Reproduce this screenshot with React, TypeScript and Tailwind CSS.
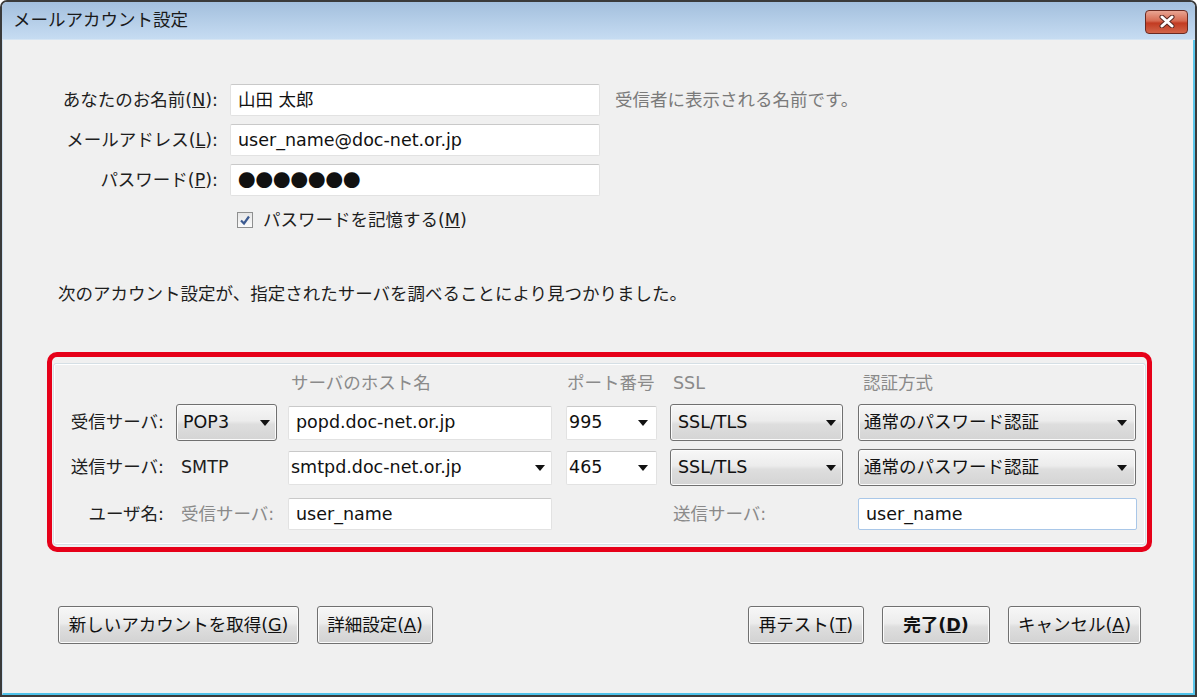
import { ReactNode } from "react";

const font = "font-['DejaVu_Sans','Noto_Sans_CJK_JP',sans-serif]";

function Arrow() {
  return (
    <svg width="10" height="6" viewBox="0 0 10 6" className="shrink-0">
      <polygon points="0,0 10,0 5,6" fill="#111" />
    </svg>
  );
}

function TextBox({ children, className = "" }: { children?: ReactNode; className?: string }) {
  return (
    <div
      className={
        "flex items-center bg-white border border-[#e2e2e2] border-t-[#c9c9c9] rounded-[2px] text-[#111] " +
        className
      }
    >
      {children}
    </div>
  );
}

function Select({ label, className = "" }: { label: string; className?: string }) {
  return (
    <div
      className={
        "flex items-center justify-between border border-[#707070] rounded-[3px] bg-[linear-gradient(to_bottom,#f7f7f7_0%,#ececec_45%,#dedede_55%,#d4d4d4_100%)] shadow-[inset_0_0_0_1px_#fbfbfb] text-[#111] " +
        className
      }
    >
      <span>{label}</span>
      <Arrow />
    </div>
  );
}

function Button({ children, className = "" }: { children: ReactNode; className?: string }) {
  return (
    <div
      className={
        "flex items-center justify-center h-[38px] border border-[#707070] rounded-[3px] bg-[linear-gradient(to_bottom,#f7f7f7_0%,#ececec_45%,#dedede_55%,#d2d2d2_100%)] shadow-[inset_0_0_0_1px_#fbfbfb] text-[#111] " +
        className
      }
    >
      {children}
    </div>
  );
}

export default function App() {
  return (
    <div className={"w-[1200px] h-[699px] bg-white text-[17.5px] " + font}>
      <div className="w-[1197px] h-[697px] border-2 border-[#3a3a3a] rounded-t-[7px] flex flex-col overflow-hidden">
        {/* title bar */}
        <div className="h-[38px] shrink-0 flex items-center justify-between pl-[11px] pr-[7px] bg-[linear-gradient(to_bottom,#a3bfdd,#c6dcf2)] border-b border-[#d6e5f3]">
          <span className="text-[#1a1a1a]">メールアカウント設定</span>
          <div className="w-[43px] h-[24px] mt-[2px] rounded-[4px] border border-[#6a2a22] bg-[linear-gradient(to_bottom,#e9a593_0%,#d66a52_45%,#c23b22_55%,#d2654a_100%)] flex items-center justify-center">
            <svg width="18" height="13" viewBox="0 0 18 13">
              <path d="M4 2 L14 11 M14 2 L4 11" stroke="#5a2a24" strokeWidth="5" strokeLinecap="round" />
              <path d="M4 2 L14 11 M14 2 L4 11" stroke="#ffffff" strokeWidth="3" strokeLinecap="round" />
            </svg>
          </div>
        </div>

        {/* content */}
        <div className="flex-1 bg-[#f0f0f0] border-l border-[#cfe0f0] border-r-2 border-r-[#5bc6ea] border-b-2 border-b-[#4fc2ea] text-[#1e1e1e]">
          <div className="pt-[44px] pl-[45px]">
            <div className="grid grid-cols-[170px_370px_1fr] gap-x-[12px] gap-y-[8px] items-center">
              <div className="text-right whitespace-nowrap">
                あなたのお名前(<u>N</u>):
              </div>
              <TextBox className="h-[32px] pl-[7px]">山田 太郎</TextBox>
              <div className="ml-[3px] text-[#7a7a7a]">受信者に表示される名前です。</div>

              <div className="text-right whitespace-nowrap">
                メールアドレス(<u>L</u>):
              </div>
              <TextBox className="h-[32px] pl-[7px]">user_name@doc-net.or.jp</TextBox>
              <div />

              <div className="text-right whitespace-nowrap">
                パスワード(<u>P</u>):
              </div>
              <TextBox className="h-[32px] pl-[7px]">
                <span className="font-['Noto_Sans_CJK_JP']">●●●●●●●</span>
              </TextBox>
              <div />
            </div>

            <div className="mt-[12px] ml-[189px] h-[24px] flex items-center">
              <div className="w-[16px] h-[16px] border border-[#8e8f8f] bg-[linear-gradient(to_bottom,#e6e6e6,#fbfbfb)] flex items-center justify-center">
                <svg width="12" height="12" viewBox="0 0 12 12">
                  <path d="M2 6.5 L5 9.5 L10 2.5" stroke="#3d5b91" strokeWidth="2.2" fill="none" />
                </svg>
              </div>
              <span className="ml-[10px]">
                パスワードを記憶する(<u>M</u>)
              </span>
            </div>

            <div className="mt-[50px] ml-[10px] h-[24px] flex items-center">
              次のアカウント設定が、指定されたサーバを調べることにより見つかりました。
            </div>
          </div>

          {/* highlighted server box */}
          <div className="mt-[46px] ml-[44px] w-[1105px] border-[5px] border-[#e60019] rounded-[10px] pt-[6px] px-[1px] pb-[2px]">
            <div className="border border-[#d5dfe5] rounded-[3px] shadow-[inset_0_0_0_1px_#ffffff] pl-[10px] pt-[6px] pb-[13px]">
              {/* headers */}
              <div className="grid grid-cols-[112px_112px_278px_104px_188px_278px] h-[24px] items-center text-[#8a8a8a]">
                <div />
                <div />
                <div className="pl-[3px]">サーバのホスト名</div>
                <div className="pl-[1px] whitespace-nowrap">ポート番号</div>
                <div className="pl-[3px]">SSL</div>
                <div className="pl-[5px]">認証方式</div>
              </div>

              {/* incoming */}
              <div className="mt-[10px] grid grid-cols-[112px_112px_278px_104px_188px_278px] h-[36px] items-center">
                <div className="text-right pr-[12px] whitespace-nowrap">受信サーバ:</div>
                <Select label="POP3" className="w-[101px] h-[37px] pl-[6px] pr-[6px]" />
                <TextBox className="w-[264px] h-[34px] pl-[7px]">popd.doc-net.or.jp</TextBox>
                <TextBox className="w-[91px] h-[34px] pl-[2px] pr-[8px] justify-between">
                  <span>995</span>
                  <Arrow />
                </TextBox>
                <Select label="SSL/TLS" className="w-[173px] h-[37px] pl-[7px] pr-[6px]" />
                <Select label="通常のパスワード認証" className="w-[278px] h-[37px] pl-[5px] pr-[8px]" />
              </div>

              {/* outgoing */}
              <div className="mt-[9px] grid grid-cols-[112px_112px_278px_104px_188px_278px] h-[36px] items-center">
                <div className="text-right pr-[12px] whitespace-nowrap">送信サーバ:</div>
                <div className="pl-[5px]">SMTP</div>
                <TextBox className="w-[264px] h-[34px] pl-[2px] pr-[6px] justify-between">
                  <span>smtpd.doc-net.or.jp</span>
                  <Arrow />
                </TextBox>
                <TextBox className="w-[91px] h-[34px] pl-[2px] pr-[8px] justify-between">
                  <span>465</span>
                  <Arrow />
                </TextBox>
                <Select label="SSL/TLS" className="w-[173px] h-[37px] pl-[7px] pr-[6px]" />
                <Select label="通常のパスワード認証" className="w-[278px] h-[37px] pl-[5px] pr-[8px]" />
              </div>

              {/* user names */}
              <div className="mt-[12px] grid grid-cols-[112px_112px_278px_104px_188px_278px] h-[34px] items-center">
                <div className="text-right pr-[12px] whitespace-nowrap">ユーザ名:</div>
                <div className="pl-[5px] text-[#8a8a8a] whitespace-nowrap">受信サーバ:</div>
                <TextBox className="w-[264px] h-[32px] pl-[7px]">user_name</TextBox>
                <div />
                <div className="pl-[3px] text-[#8a8a8a]">送信サーバ:</div>
                <TextBox className="w-[279px] h-[32px] pl-[7px] !border-[#a9c7e8]">user_name</TextBox>
              </div>
            </div>
          </div>

          {/* buttons */}
          <div className="mt-[54px] pl-[55px] pr-[52px] flex items-center justify-between">
            <div className="flex gap-[18px]">
              <Button className="w-[241px]">
                新しいアカウントを取得(<u>G</u>)
              </Button>
              <Button className="w-[116px]">
                詳細設定(<u>A</u>)
              </Button>
            </div>
            <div className="flex gap-[18px]">
              <Button className="w-[116px]">
                再テスト(<u>T</u>)
              </Button>
              <Button className="w-[108px] font-bold">
                完了(<u>D</u>)
              </Button>
              <Button className="w-[133px]">
                キャンセル(<u>A</u>)
              </Button>
            </div>
          </div>
        </div>
      </div>
    </div>
  );
}
